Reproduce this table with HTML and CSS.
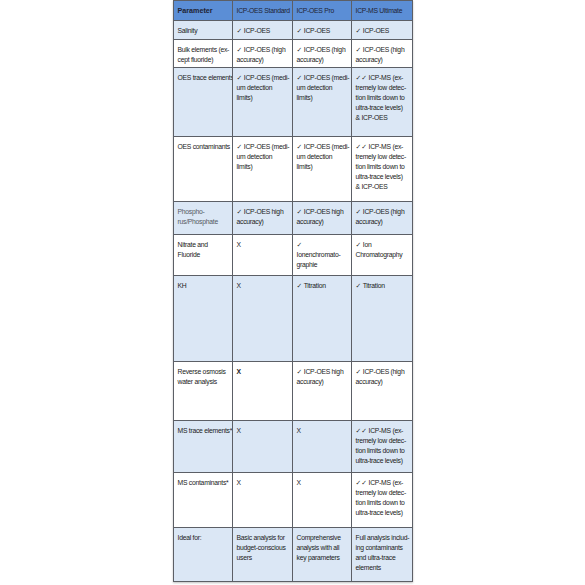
FILE: index.html
```html
<!DOCTYPE html>
<html>
<head>
<meta charset="utf-8">
<link rel="stylesheet" href="styles.css">
</head>
<body>
<div class="page">
<div class="cmp">
  <div class="row head">
    <div class="cell first">Parameter</div>
    <div class="cell">ICP-OES Standard</div>
    <div class="cell">ICP-OES Pro</div>
    <div class="cell">ICP-MS Ultimate</div>
  </div>
  <div class="row alt">
    <div class="cell">Salinity</div><div class="cell"><span class="ck">✓</span> ICP-OES</div><div class="cell"><span class="ck">✓</span> ICP-OES</div><div class="cell"><span class="ck">✓</span> ICP-OES</div>
  </div>
  <div class="row">
    <div class="cell">Bulk elements (ex-<br>cept fluoride)</div>
    <div class="cell"><span class="ck">✓</span> ICP-OES (high<br>accuracy)</div>
    <div class="cell"><span class="ck">✓</span> ICP-OES (high<br>accuracy)</div>
    <div class="cell"><span class="ck">✓</span> ICP-OES (high<br>accuracy)</div>
  </div>
  <div class="row alt">
    <div class="cell">OES trace elements</div>
    <div class="cell"><span class="ck">✓</span> ICP-OES (medi-<br>um detection<br>limits)</div>
    <div class="cell"><span class="ck">✓</span> ICP-OES (medi-<br>um detection<br>limits)</div>
    <div class="cell"><span class="ck">✓✓</span> ICP-MS (ex-<br>tremely low detec-<br>tion limits down to<br>ultra-trace levels)<br>&amp; ICP-OES</div>
  </div>
  <div class="row">
    <div class="cell">OES contaminants</div>
    <div class="cell"><span class="ck">✓</span> ICP-OES (medi-<br>um detection<br>limits)</div>
    <div class="cell"><span class="ck">✓</span> ICP-OES (medi-<br>um detection<br>limits)</div>
    <div class="cell"><span class="ck">✓✓</span> ICP-MS (ex-<br>tremely low detec-<br>tion limits down to<br>ultra-trace levels)<br>&amp; ICP-OES</div>
  </div>
  <div class="row alt">
    <div class="cell muted">Phospho-<br>rus/Phosphate</div>
    <div class="cell"><span class="ck">✓</span> ICP-OES high<br>accuracy)</div>
    <div class="cell"><span class="ck">✓</span> ICP-OES high<br>accuracy)</div>
    <div class="cell"><span class="ck">✓</span> ICP-OES (high<br>accuracy)</div>
  </div>
  <div class="row">
    <div class="cell">Nitrate and<br>Fluoride</div>
    <div class="cell">X</div>
    <div class="cell"><span class="ck">✓</span><br>Ionenchromato-<br>graphie</div>
    <div class="cell"><span class="ck">✓</span> Ion<br>Chromatography</div>
  </div>
  <div class="row alt">
    <div class="cell">KH</div><div class="cell">X</div><div class="cell"><span class="ck">✓</span> Titration</div><div class="cell"><span class="ck">✓</span> Titration</div>
  </div>
  <div class="row">
    <div class="cell">Reverse osmosis<br>water analysis</div>
    <div class="cell"><b class="xb">X</b></div>
    <div class="cell"><span class="ck">✓</span> ICP-OES high<br>accuracy)</div>
    <div class="cell"><span class="ck">✓</span> ICP-OES (high<br>accuracy)</div>
  </div>
  <div class="row alt">
    <div class="cell">MS trace elements*</div>
    <div class="cell">X</div>
    <div class="cell">X</div>
    <div class="cell"><span class="ck">✓✓</span> ICP-MS (ex-<br>tremely low detec-<br>tion limits down to<br>ultra-trace levels)</div>
  </div>
  <div class="row">
    <div class="cell">MS contaminants*</div>
    <div class="cell">X</div>
    <div class="cell">X</div>
    <div class="cell"><span class="ck">✓✓</span> ICP-MS (ex-<br>tremely low detec-<br>tion limits down to<br>ultra-trace levels)</div>
  </div>
  <div class="row alt">
    <div class="cell">Ideal for:</div>
    <div class="cell">Basic analysis for<br>budget-conscious<br>users</div>
    <div class="cell">Comprehensive<br>analysis with all<br>key parameters</div>
    <div class="cell">Full analysis includ-<br>ing contaminants<br>and ultra-trace<br>elements</div>
  </div>
</div>
</div>
</body>
</html>
```

FILE: styles.css
```css
html, body {
  margin: 0;
  padding: 0;
  background: #ffffff;
}
.page {
  width: 585px;
  height: 585px;
  display: flex;
  justify-content: center;
  align-items: flex-start;
  overflow: hidden;
}
.cmp {
  display: grid;
  grid-template-columns: 59px 60px 59px 61px;
  grid-template-rows: 21px 19px 28px 69px 65px 33px 41px 86px 59px 52px 55px 54px;
  border-left: 1px solid #5c5f66;
  font-family: "Liberation Sans", Arial, "DejaVu Sans", sans-serif;
  font-size: 6.8px;
  letter-spacing: -0.26px;
  line-height: 10px;
  color: #222222;
  box-shadow: 0 1px 2px rgba(0,0,0,0.25);
}
.row { display: contents; }
.cell {
  box-sizing: border-box;
  border-right: 1px solid #5c5f66;
  border-bottom: 1px solid #5c5f66;
  padding: 5px 0 0 4px;
  white-space: nowrap;
  overflow: hidden;
  background: #ffffff;
}
.alt .cell { background: #dbe7f5; }
.head .cell {
  background: #5b8ed6;
  color: #1f2333;
  border-top: 1px solid #5c5f66;
  padding: 0 0 0 4px;
  display: flex;
  align-items: center;
}
.head .first {
  font-weight: bold;
  font-size: 7.2px;
  letter-spacing: 0;
}
.muted { color: #555a62; }
.ck {
  font-family: "DejaVu Sans", sans-serif;
  font-weight: bold;
  letter-spacing: 0;
}
.xb { font-weight: bold; }
```
